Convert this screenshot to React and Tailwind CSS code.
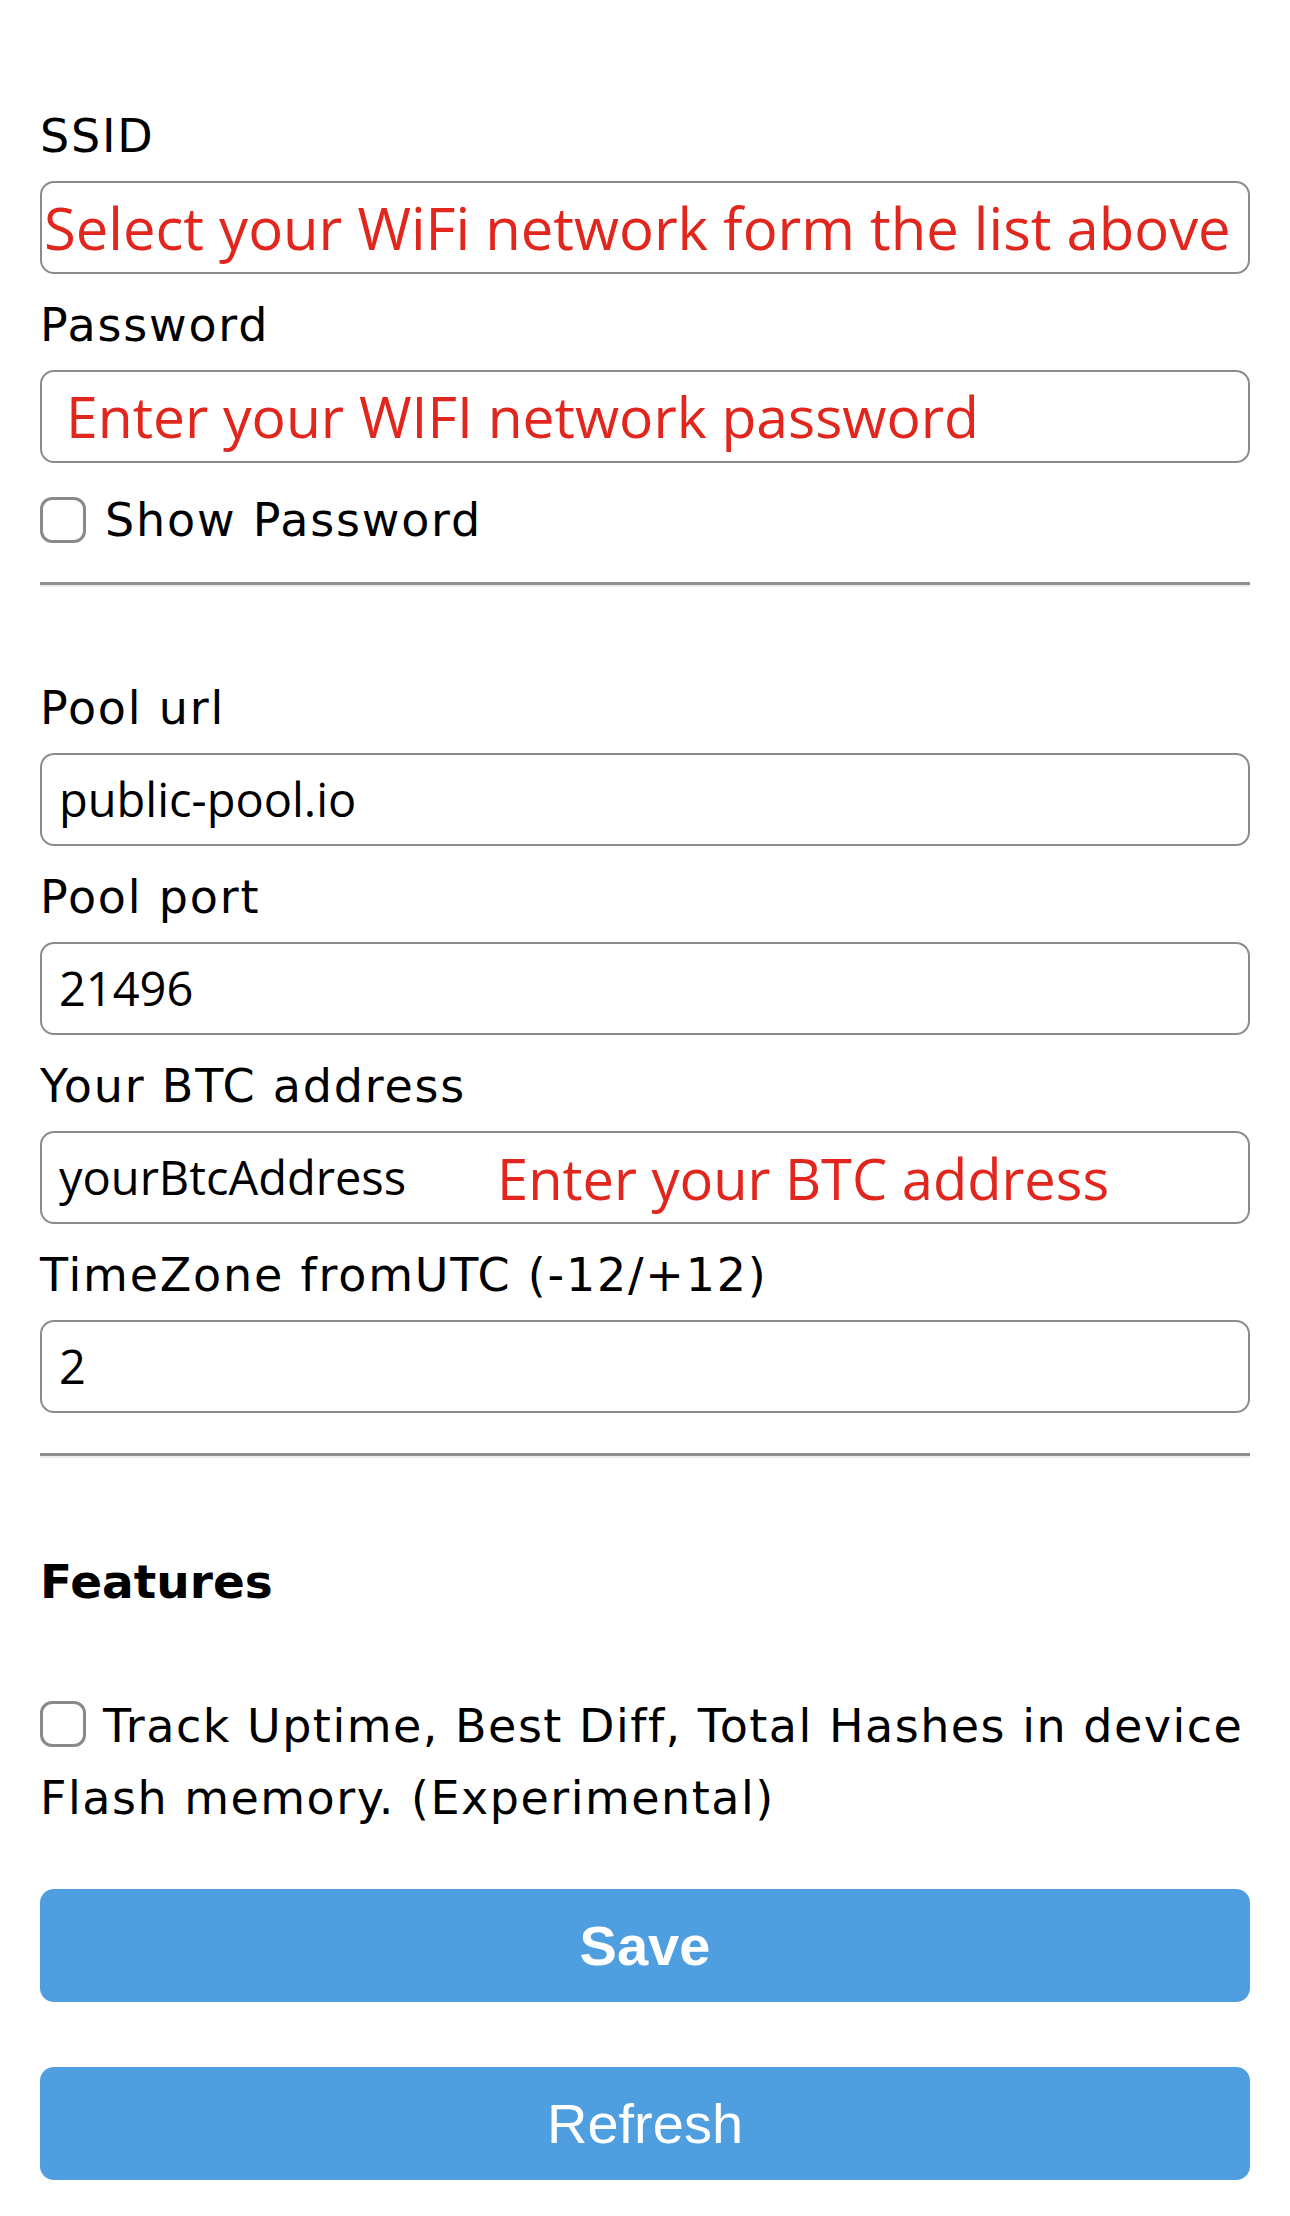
const Field = ({ label, children, className = "" }) => {
  return (
    <div className={className}>
      <label className="block pt-[23px] pb-[17px] leading-[56px] tracking-[1.8px]">{label}</label>
      <div className="flex h-[93px] items-center rounded-[14px] border-2 border-[#8c8c8c] bg-white font-['Open_Sans',sans-serif] text-[47px]">
        {children}
      </div>
    </div>
  );
};

const Box = () => (
  <span className="inline-block h-[46px] w-[46px] shrink-0 rounded-[12px] border-[3px] border-[#8a8a8a] bg-white" />
);

const App = () => {
  return (
    <div className="min-h-screen bg-white px-[40px] pt-[85px] pb-[36px] font-['DejaVu_Sans',sans-serif] text-[46px] text-black">
      <Field label="SSID">
        <span className="pl-[2px] text-[58px] text-[#e0261d]">
          Select your WiFi network form the list above
        </span>
      </Field>
      <Field label="Password">
        <span className="pl-[24px] text-[57px] text-[#e0261d]">
          Enter your WIFI network password
        </span>
      </Field>

      <div className="mt-[29px] flex items-center gap-[19px] leading-[56px] tracking-[1.8px]">
        <Box />
        <span>Show Password</span>
      </div>

      <hr className="mt-[34px] h-0 border-t-[3px] border-b-2 border-t-[#8f8f8f] border-b-[#ececec]" />

      <Field label="Pool url" className="mt-[70px]">
        <span className="pl-[17px]">public-pool.io</span>
      </Field>
      <Field label="Pool port">
        <span className="pl-[17px]">21496</span>
      </Field>
      <Field label="Your BTC address">
        <span className="pl-[17px]">yourBtcAddress</span>
        <span className="pl-[91px] text-[56px] text-[#e0261d]">Enter your BTC address</span>
      </Field>
      <Field label="TimeZone fromUTC (-12/+12)">
        <span className="pl-[17px]">2</span>
      </Field>

      <hr className="mt-[40px] h-0 border-t-[3px] border-b-2 border-t-[#8f8f8f] border-b-[#ececec]" />

      <h3 className="mt-[96px] text-[47px] font-bold leading-[56px]">Features</h3>

      <p className="mt-[80px] leading-[72px] tracking-[1.5px]">
        <span className="mr-[17px] inline-block h-[46px] w-[46px] rounded-[12px] border-[3px] border-[#8a8a8a] align-[-5px]" />
        Track Uptime, Best Diff, Total Hashes in device Flash memory. (Experimental)
      </p>

      <div className="mt-[55px] flex flex-col gap-[65px] font-['Liberation_Sans',Arial,sans-serif] text-[56px] text-white">
        <button className="h-[113px] w-full rounded-[14px] bg-[#4f9ee0] font-bold">Save</button>
        <button className="h-[113px] w-full rounded-[14px] bg-[#4f9ee0]">Refresh</button>
      </div>
    </div>
  );
};

export default App;
